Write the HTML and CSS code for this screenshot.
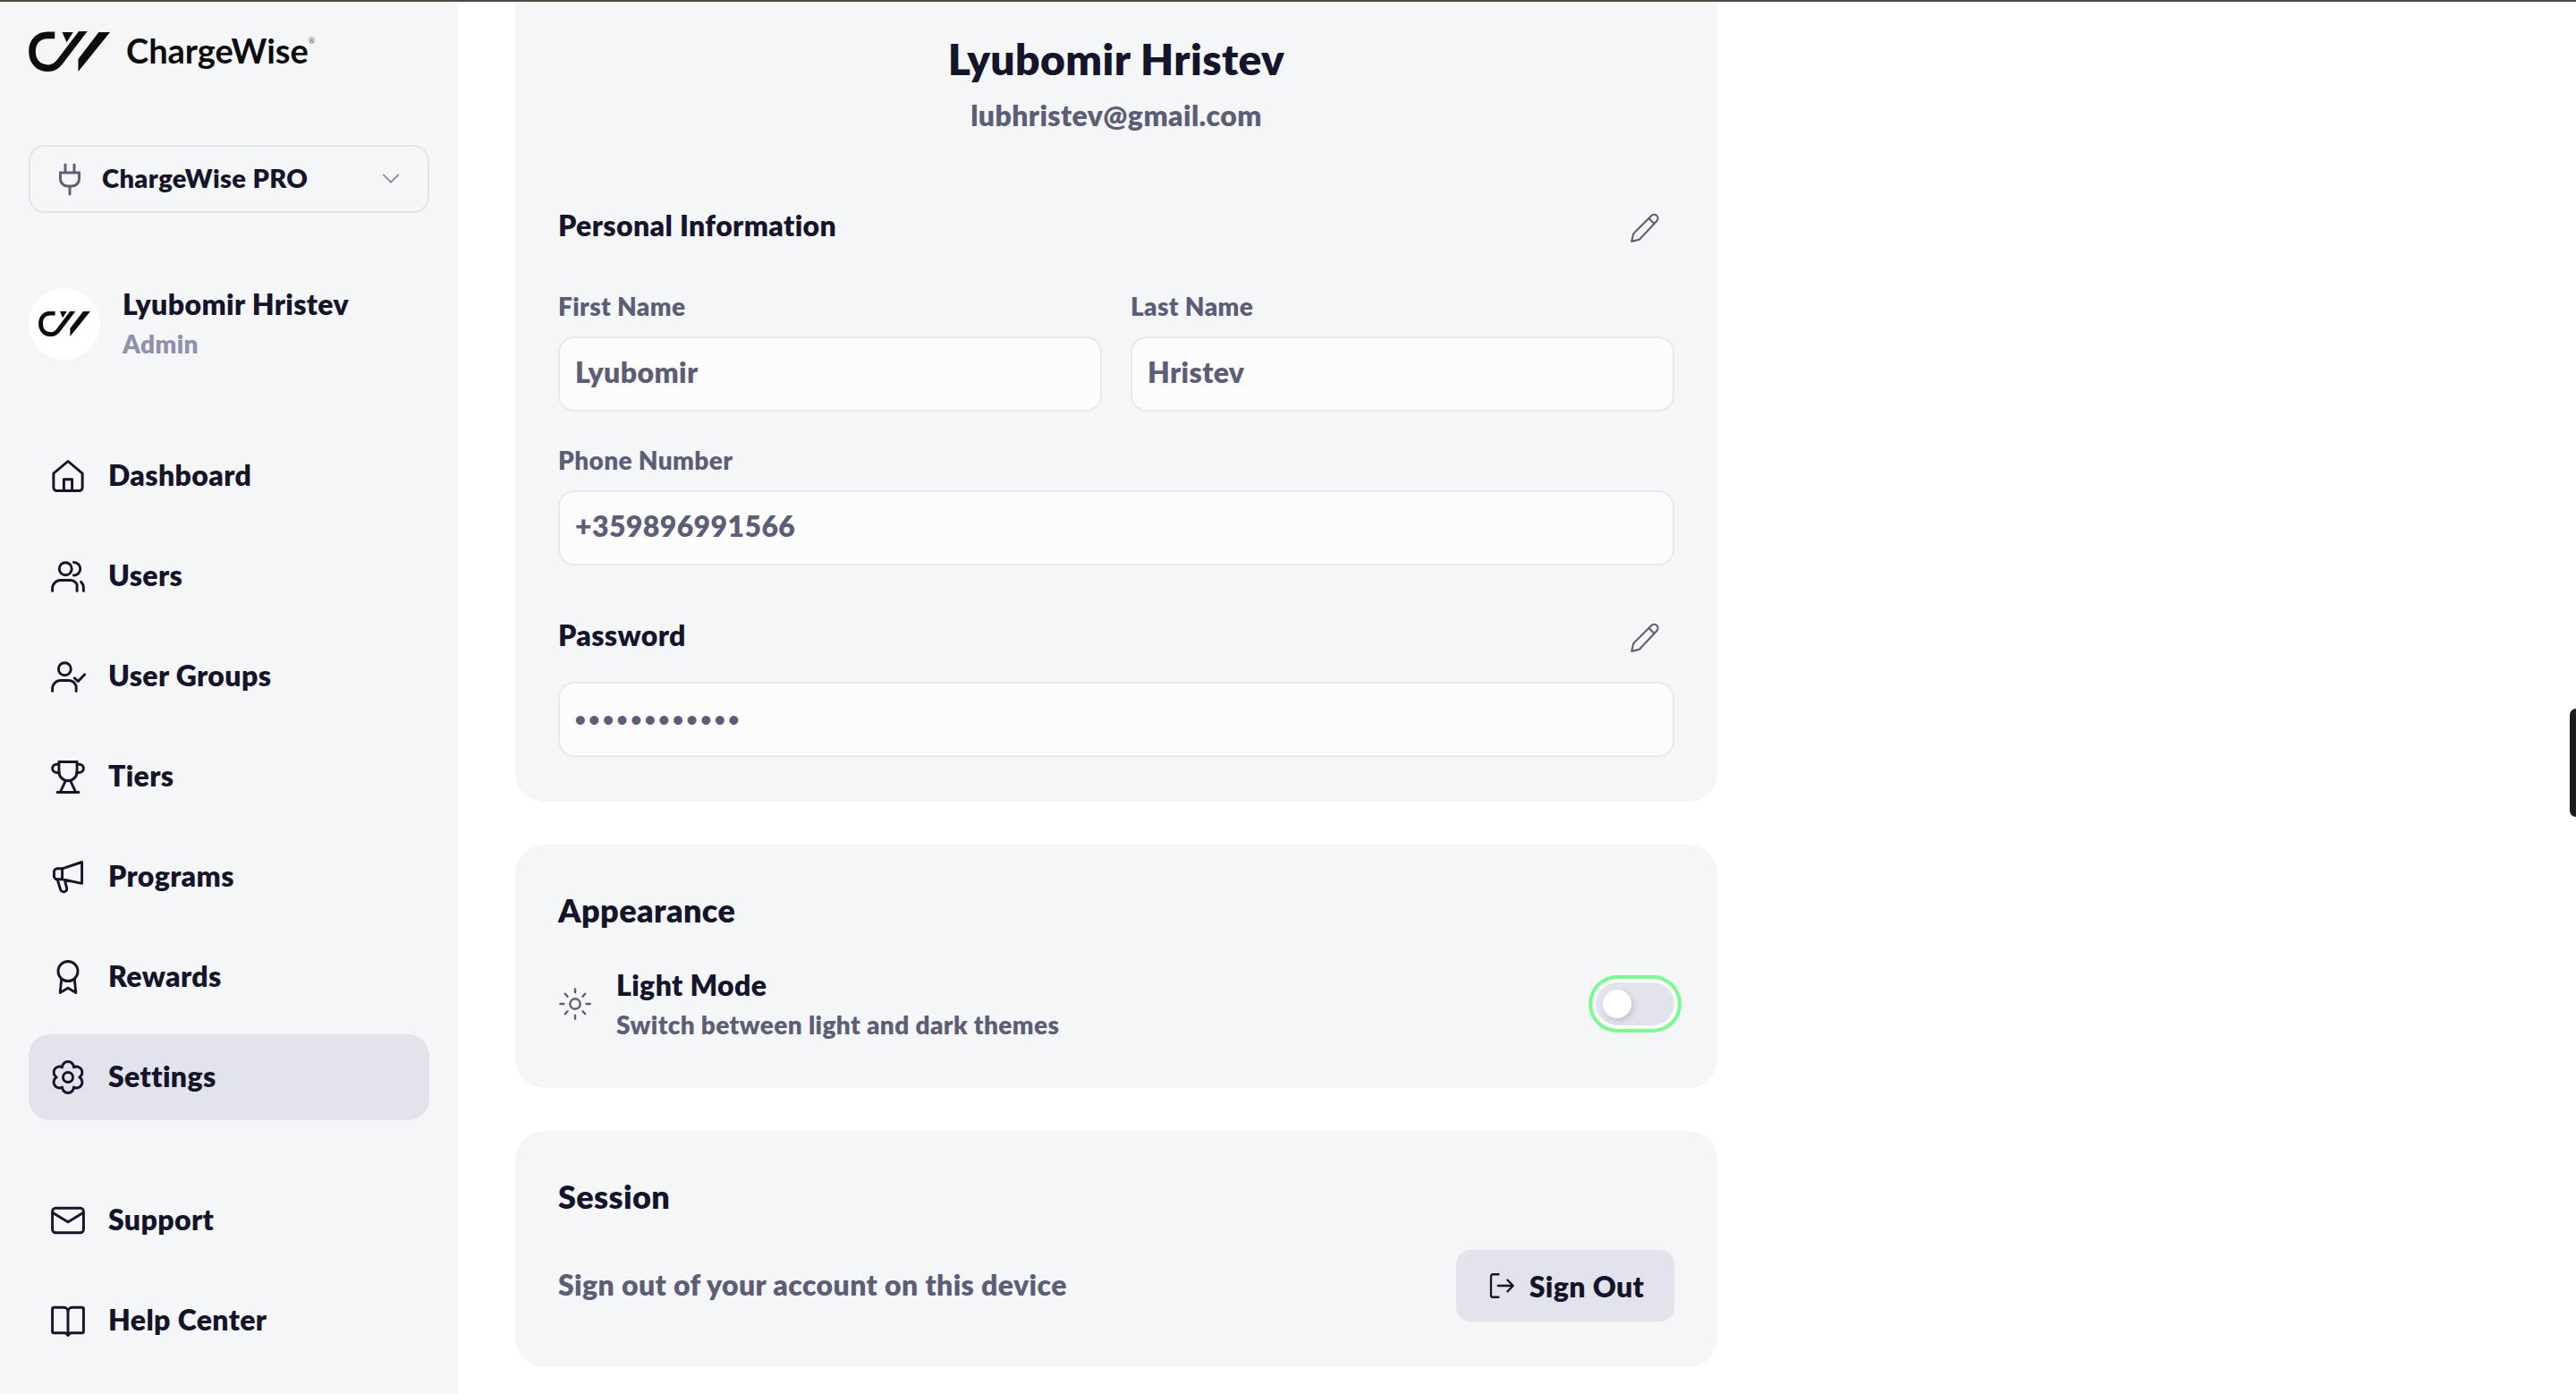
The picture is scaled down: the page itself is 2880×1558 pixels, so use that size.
FILE: index.html
```html
<!DOCTYPE html>
<html>
<head>
  <title>ChargeWise - Settings</title>
  <link rel="stylesheet" href="styles.css">
</head>
<body>
  <svg class="defs" width="0" height="0">
    <symbol id="cw-logo" viewBox="36 78 274 132">
      <path d="M124 88H100C68 88 48 110 48 142C48 178 70 199 102 199C122 199 133 189 143 175L226 66" fill="none" stroke="currentColor" stroke-width="23"/>
      <polygon points="149,78 186,78 164,112" fill="currentColor"/>
      <polygon points="272,78 310,78 203,210 203,168" fill="currentColor"/>
    </symbol>
  </svg>

  <div class="page">
    <div class="sidebar">
      <div class="brand">
        <svg class="brand-logo"><use href="#cw-logo"/></svg>
        <span class="brand-name">ChargeWise<sup class="reg">®</sup></span>
      </div>

      <div class="tier-select">
        <svg class="plug" viewBox="0 0 24 37" fill="none" stroke="currentColor" stroke-width="3" stroke-linecap="round"><path d="M7 2v9M17 2v9M1.5 11h21v7a8 8 0 0 1-8 8h-5a8 8 0 0 1-8-8zM12 26v9"/></svg>
        <span class="tier-name">ChargeWise PRO</span>
        <svg class="chevron" viewBox="0 0 24 24" fill="none" stroke="currentColor" stroke-width="2" stroke-linecap="round" stroke-linejoin="round"><path d="M3 7l9 9 9-9"/></svg>
      </div>

      <div class="profile">
        <div class="avatar"><svg class="avatar-logo"><use href="#cw-logo"/></svg></div>
        <div>
          <div class="profile-name">Lyubomir Hristev</div>
          <div class="profile-role">Admin</div>
        </div>
      </div>

      <div class="nav">
        <a class="nav-item" href="#">
          <svg class="nav-icon" viewBox="0 0 24 24"><path d="M3.2 10.4L12 3l8.8 7.4V19a2 2 0 0 1-2 2H5.200a2 2 0 0 1-2-2zM9.500 21v-7h5v7"/></svg>
          Dashboard
        </a>
        <a class="nav-item" href="#">
          <svg class="nav-icon" viewBox="0 0 24 24"><circle cx="10.500" cy="7.500" r="3.800"/><path d="M2.500 21v-1.500a5 5 0 0 1 5-5h6a5 5 0 0 1 4 2.500V21M15.500 3.500a4 4 0 0 1 0 8M20 15.500a5 5 0 0 1 1.500 3.500v2"/></svg>
          Users
        </a>
        <a class="nav-item" href="#">
          <svg class="nav-icon" viewBox="0 0 24 24"><circle cx="10" cy="7.500" r="3.800"/><path d="M2.500 21v-1.500a5 5 0 0 1 5-5h5a5 5 0 0 1 4.500 3.500V21M16 13l2.200 2 4-4.200"/></svg>
          User Groups
        </a>
        <a class="nav-item" href="#">
          <svg class="nav-icon" viewBox="0 0 24 24"><path d="M6.500 3h11v6a5.500 5.500 0 0 1-11 0zM6.500 4.500H5a2.500 2.500 0 0 0 0 5h1.800M17.500 4.500H19a2.500 2.500 0 0 1 0 5h-1.800M10.500 14.500L7.500 21M13.500 14.500l3 6.500M5.500 21.500h13"/></svg>
          Tiers
        </a>
        <a class="nav-item" href="#">
          <svg class="nav-icon" viewBox="0 0 24 24"><path d="M20.500 3v13l-12-2.500H5.500a2 2 0 0 1-2-2V9a2 2 0 0 1 2-2h3zM8.500 7v6.500M5.500 13.500l2 6.500a2 2 0 0 0 3.800-1l-1.300-5"/></svg>
          Programs
        </a>
        <a class="nav-item" href="#">
          <svg class="nav-icon" viewBox="0 0 24 24"><circle cx="12" cy="8.500" r="6"/><path d="M8 13.500L7.200 21.500l4.800-2.800 4.800 2.800-.8-8"/></svg>
          Rewards
        </a>
        <a class="nav-item active" href="#">
          <svg class="nav-icon" viewBox="0 0 24 24"><path d="M8.500 5.940A3.500 3.500 0 0 1 15.500 5.940A3.500 3.500 0 0 1 19 12A3.500 3.500 0 0 1 15.500 18.060A3.500 3.500 0 0 1 8.500 18.060A3.500 3.500 0 0 1 5 12A3.500 3.500 0 0 1 8.500 5.940z"/><circle cx="12" cy="12" r="3"/></svg>
          Settings
        </a>
      </div>

      <div class="nav nav-bottom">
        <a class="nav-item" href="#">
          <svg class="nav-icon" viewBox="0 0 24 24"><rect x="2.500" y="4.500" width="19" height="15" rx="2"/><path d="M3 7.500l9 5.500 9-5.500"/></svg>
          Support
        </a>
        <a class="nav-item" href="#">
          <svg class="nav-icon" viewBox="0 0 24 24"><path d="M12 6.500V20M12 6.500A2.500 2.500 0 0 0 9.500 4H3.500a1 1 0 0 0-1 1v13.500a1 1 0 0 0 1 1h7l1.500 1.500 1.500-1.500h7a1 1 0 0 0 1-1V5a1 1 0 0 0-1-1h-6A2.500 2.500 0 0 0 12 6.500z"/></svg>
          Help Center
        </a>
      </div>
    </div>

    <div class="main">
      <div class="card card-profile">
        <h1 class="user-name">Lyubomir Hristev</h1>
        <div class="user-email">lubhristev@gmail.com</div>

        <div class="section-head section-personal">
          <span class="section-label">Personal Information</span>
          <svg class="edit-icon" viewBox="0 0 24 24"><path d="M3.500 20.500l1.200-5L16.200 4a2.400 2.400 0 0 1 3.400 3.400L8.500 19.300zM14.500 5.700l3.500 3.500"/></svg>
        </div>

        <div class="name-row">
          <div>
            <div class="field-label">First Name</div>
            <div class="field-box">Lyubomir</div>
          </div>
          <div>
            <div class="field-label">Last Name</div>
            <div class="field-box">Hristev</div>
          </div>
        </div>

        <div class="phone-field">
          <div class="field-label">Phone Number</div>
          <div class="field-box">+359896991566</div>
        </div>

        <div class="section-head section-password">
          <span class="section-label">Password</span>
          <svg class="edit-icon" viewBox="0 0 24 24"><path d="M3.500 20.500l1.200-5L16.200 4a2.400 2.400 0 0 1 3.400 3.400L8.500 19.300zM14.500 5.700l3.500 3.500"/></svg>
        </div>
        <div class="field-box password-box">••••••••••••</div>
      </div>

      <div class="card card-appearance">
        <h2 class="card-title">Appearance</h2>
        <div class="setting-row">
          <svg class="sun-icon" viewBox="0 0 24 24"><circle cx="12" cy="12" r="3.600"/><path d="M12 1.500v2.500M12 20v2.500M1.500 12H4M20 12h2.500M4.900 4.900l1.700 1.900M17.400 17.200l1.700 1.900M19.100 4.900l-1.700 1.900M6.600 17.200l-1.700 1.900"/></svg>
          <div class="setting-text">
            <div class="setting-title">Light Mode</div>
            <div class="setting-sub">Switch between light and dark themes</div>
          </div>
          <div class="toggle"><div class="toggle-thumb"></div></div>
        </div>
      </div>

      <div class="card card-session">
        <h2 class="card-title">Session</h2>
        <div class="session-row">
          <span class="session-text">Sign out of your account on this device</span>
          <button class="signout-btn">
            <svg class="signout-icon" viewBox="0 0 24 24"><path d="M9.500 3H5a1.500 1.500 0 0 0-1.500 1.500v15A1.500 1.500 0 0 0 5 21h4.500M9 12h12M16.500 7.500L21 12l-4.500 4.500"/></svg>
            Sign Out
          </button>
        </div>
      </div>
    </div>
  </div>

  <div class="side-handle"></div>
</body>
</html>
```

FILE: styles.css
```css
* {
  box-sizing: border-box;
}

html, body {
  height: 100%;
}

body {
  margin: 0;
  padding: 0;
  overflow: hidden;
  background: #fff;
  border-top: 2px solid #454d45;
  font-family: Lato, "Open Sans", sans-serif;
  font-weight: 800;
  letter-spacing: 0.024em;
  color: #14152b;
}

.defs {
  position: absolute;
}

.page {
  display: flex;
  height: 1556px;
}

/* sidebar */

.sidebar {
  width: 512px;
  flex-shrink: 0;
  padding: 31px 32px 0;
  background: #f5f6f8;
}

.brand {
  display: flex;
  align-items: center;
  height: 46px;
}

.brand-logo {
  width: 91px;
  height: 46px;
  margin-top: 4px;
  color: #0d0d10;
}

.brand-name {
  margin-left: 18px;
  font-size: 38px;
  font-weight: 700;
  letter-spacing: 0;
  color: #0d0d10;
}

.reg {
  font-size: 9px;
  font-weight: 400;
  color: #55565c;
  vertical-align: 22px;
  line-height: 0;
}

.tier-select {
  display: flex;
  align-items: center;
  height: 76px;
  margin-top: 83px;
  padding: 0 30px 3px 32px;
  border: 2px solid #e2e3eb;
  border-radius: 18px;
}

.plug {
  width: 24px;
  height: 37px;
  margin-top: 3px;
  color: #5f6079;
}

.tier-name {
  flex: 1;
  margin-left: 24px;
  font-size: 29px;
}

.chevron {
  width: 22px;
  height: 22px;
  margin-top: 3px;
  color: #85869f;
}

.profile {
  display: flex;
  align-items: center;
  margin-top: 84px;
}

.avatar {
  display: flex;
  align-items: center;
  justify-content: center;
  width: 80px;
  height: 80px;
  border-radius: 50%;
  background: #fff;
}

.avatar-logo {
  width: 58px;
  height: 28px;
  color: #0d0d10;
}

.profile-name {
  margin-left: 25px;
  font-size: 32px;
  line-height: 40px;
  margin-top: -3px;
}

.profile-role {
  margin-top: 6px;
  margin-left: 25px;
  font-size: 28px;
  line-height: 36px;
  color: #8f90ab;
}

.nav {
  display: flex;
  flex-direction: column;
  gap: 16px;
  margin-top: 82px;
}

.nav-bottom {
  margin-top: 64px;
}

.nav-item {
  display: flex;
  align-items: center;
  height: 96px;
  padding: 0 0 3px 22px;
  border-radius: 24px;
  font-size: 32px;
  color: #14152b;
  text-decoration: none;
}

.nav-item.active {
  background: #e2e3eb;
}

.nav-icon {
  width: 44px;
  height: 44px;
  margin: 3px 23px 0 0;
  fill: none;
  stroke: #14152b;
  stroke-width: 1.600;
  stroke-linecap: round;
  stroke-linejoin: round;
}

/* main column */

.main {
  width: 1344px;
  margin-left: 64px;
}

.card {
  background: #f5f6f8;
  border-radius: 32px;
  padding: 0 48px;
  margin-bottom: 48px;
}

.card-profile {
  height: 894px;
  padding-top: 36px;
  border-radius: 0 0 32px 32px;
}

.user-name {
  margin: 0;
  font-size: 48px;
  font-weight: 800;
  line-height: 56px;
  text-align: center;
}

.user-email {
  margin-top: 15px;
  font-size: 32px;
  line-height: 40px;
  text-align: center;
  color: #5c5e78;
}

.section-head {
  display: flex;
  align-items: center;
  justify-content: space-between;
  padding-right: 12px;
}

.section-personal {
  margin-top: 83px;
}

.section-password {
  margin-top: 58px;
}

.section-label {
  font-size: 32px;
  line-height: 40px;
}

.edit-icon {
  width: 42px;
  height: 42px;
  margin: 2px 0 -4px;
  fill: none;
  stroke: #5c5e78;
  stroke-width: 1.200;
  stroke-linejoin: round;
}

.name-row {
  display: grid;
  grid-template-columns: 608px 608px;
  gap: 32px;
  margin-top: 52px;
}

.field-label {
  margin-bottom: 16px;
  font-size: 28px;
  line-height: 36px;
  color: #5c5e78;
}

.field-box {
  height: 84px;
  padding: 0 17px;
  background: #fcfcfd;
  border: 2px solid #e9eaef;
  border-radius: 18px;
  font-size: 32px;
  line-height: 76px;
  color: #5c5e78;
}

.phone-field {
  margin-top: 36px;
}

.password-box {
  margin-top: 32px;
  font-size: 20px;
  line-height: 78px;
  letter-spacing: 4px;
}

.card-appearance {
  height: 272px;
  padding-top: 51px;
}

.card-session {
  height: 264px;
  padding-top: 51px;
}

.card-title {
  margin: 0;
  font-size: 36px;
  font-weight: 800;
  line-height: 44px;
}

.setting-row {
  display: flex;
  align-items: center;
  margin-top: 42px;
}

.sun-icon {
  width: 38px;
  height: 38px;
  fill: none;
  stroke: #5c5e78;
  stroke-width: 1.500;
  stroke-linecap: round;
}

.setting-text {
  flex: 1;
  margin-left: 27px;
}

.setting-title {
  font-size: 32px;
  line-height: 40px;
}

.setting-sub {
  margin-top: 6px;
  font-size: 28px;
  line-height: 36px;
  color: #5c5e78;
}

.toggle {
  width: 88px;
  height: 48px;
  padding: 8px;
  background: #e2e3eb;
  border-radius: 24px;
  box-shadow: 0 0 0 4px #fff, 0 0 0 8px #78fb8f;
}

.toggle-thumb {
  width: 32px;
  height: 32px;
  background: #fff;
  border-radius: 50%;
  box-shadow: 2px 3px 6px rgba(40, 40, 70, 0.18);
}

.session-row {
  display: flex;
  align-items: center;
  justify-content: space-between;
  margin-top: 38px;
}

.session-text {
  padding-bottom: 3px;
  font-size: 32px;
  color: #5c5e78;
}

.signout-btn {
  display: flex;
  align-items: center;
  justify-content: center;
  width: 244px;
  height: 80px;
  background: #e2e3eb;
  border: none;
  border-radius: 16px;
  font-family: inherit;
  font-size: 32px;
  font-weight: 800;
  letter-spacing: inherit;
  color: #14152b;
}

.signout-icon {
  width: 34px;
  height: 34px;
  margin-right: 14px;
  fill: none;
  stroke: #14152b;
  stroke-width: 1.600;
  stroke-linecap: round;
  stroke-linejoin: round;
}

.side-handle {
  position: absolute;
  top: 792px;
  right: 0;
  width: 7px;
  height: 121px;
  background: #1c1c1c;
  border-radius: 14px 0 0 14px;
}
```
